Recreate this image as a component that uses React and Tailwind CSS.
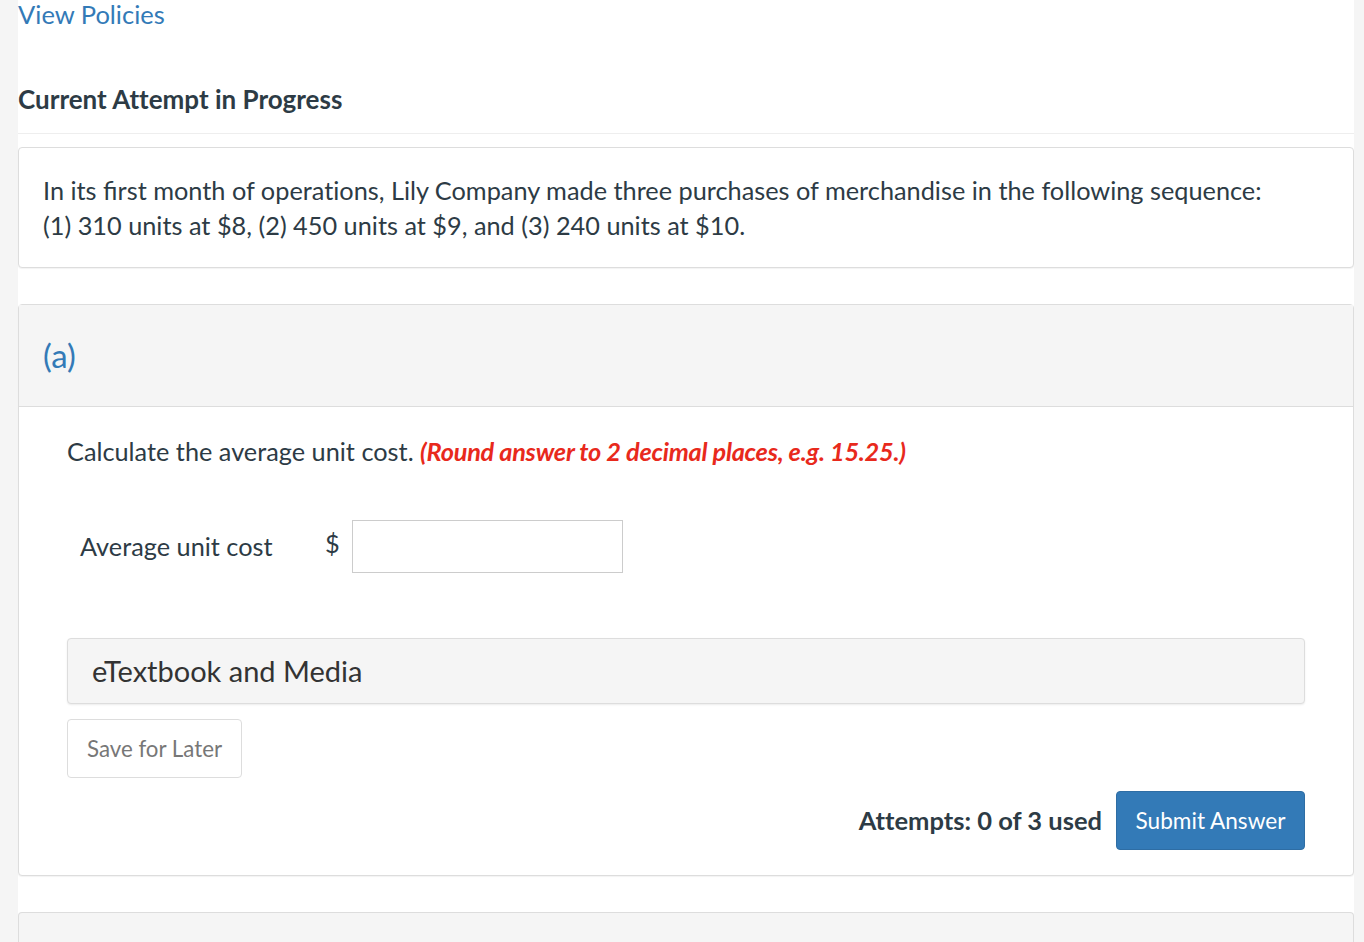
import React from "react";

const FONT = {
  fontFamily: "Lato, 'Open Sans', sans-serif",
};

export default function App() {
  return (
    <div
      className="flex min-h-[942px] w-full bg-[#f5f5f5] [font-variant-ligatures:no-common-ligatures]"
      style={FONT}
    >
      <div className="w-[18px] shrink-0 bg-[#f5f5f5]" />
      <main className="w-[1336px] shrink-0 bg-white text-[#2d3b45]">
        <a href="#" className="-mt-[3px] block text-[25.5px] leading-[34px] text-[#337ab7]">
          View Policies
        </a>

        <h2 className="mt-[51px] text-[26px] font-bold leading-[34px]">Current Attempt in Progress</h2>
        <div className="mt-[17px] border-t border-[#eeeeee]" />

        <section className="mt-[13px] rounded-[4px] border border-[#dddddd] bg-white px-6 pb-[24px] pt-[25px] shadow-[0_1px_1px_rgba(0,0,0,0.05)]">
          <p className="text-[25.3px] leading-[35px]">
            In its <span className="[font-variant-ligatures:common-ligatures]">first</span> month of operations, Lily
            Company made three purchases of merchandise in the following sequence:
            <br />
            (1) 310 units at $8, (2) 450 units at $9, and (3) 240 units at $10.
          </p>
        </section>

        <section className="mt-[36px] rounded-[4px] border border-[#dddddd] bg-white shadow-[0_1px_1px_rgba(0,0,0,0.05)]">
          <div className="flex h-[102px] items-center border-b border-[#dddddd] bg-[#f5f5f5] px-6">
            <span className="text-[33px] leading-none text-[#337ab7]">(a)</span>
          </div>

          <div className="px-12 pb-[25px]">
            <p className="mt-[27px] text-[25.3px] leading-[35px]">
              Calculate the average unit cost.{" "}
              <span className="font-bold italic tracking-[-0.25px] text-[#e8291c]">
                (Round answer to 2 decimal places, e.g. 15.25.)
              </span>
            </p>

            <div className="mt-[51px] flex items-center pl-[13px]">
              <span className="w-[245px] text-[25.3px] leading-[35px]">Average unit cost</span>
              <span className="-mt-[6px] w-[27px] text-[25.3px] leading-[35px]">$</span>
              <input
                type="text"
                className="h-[53px] w-[271px] border border-[#cccccc] bg-white px-3 text-[22px] outline-none"
              />
            </div>

            <div className="mt-[65px] flex h-[66px] items-center rounded-[4px] border border-[#dddddd] bg-[#f5f5f5] px-6 shadow-[0_1px_2px_rgba(0,0,0,0.08)]">
              <span className="text-[29px] text-[#333333]">eTextbook and Media</span>
            </div>

            <button
              type="button"
              className="mt-[15px] h-[59px] w-[175px] rounded-[4px] border border-[#dddddd] bg-white text-[22.3px] text-[#777777]"
            >
              Save for Later
            </button>

            <div className="mt-[13px] flex items-center justify-end gap-[14px]">
              <span className="text-[25.5px] font-bold">Attempts: 0 of 3 used</span>
              <button
                type="button"
                className="h-[59px] w-[189px] rounded-[4px] border border-[#2e6da4] bg-[#337ab7] text-[22.6px] text-white"
              >
                Submit Answer
              </button>
            </div>
          </div>
        </section>

        <section className="mt-[36px] h-[40px] rounded-t-[4px] border border-b-0 border-[#dddddd] bg-[#f5f5f5]" />
      </main>
      <div className="flex-1 bg-[#f5f5f5]" />
    </div>
  );
}
